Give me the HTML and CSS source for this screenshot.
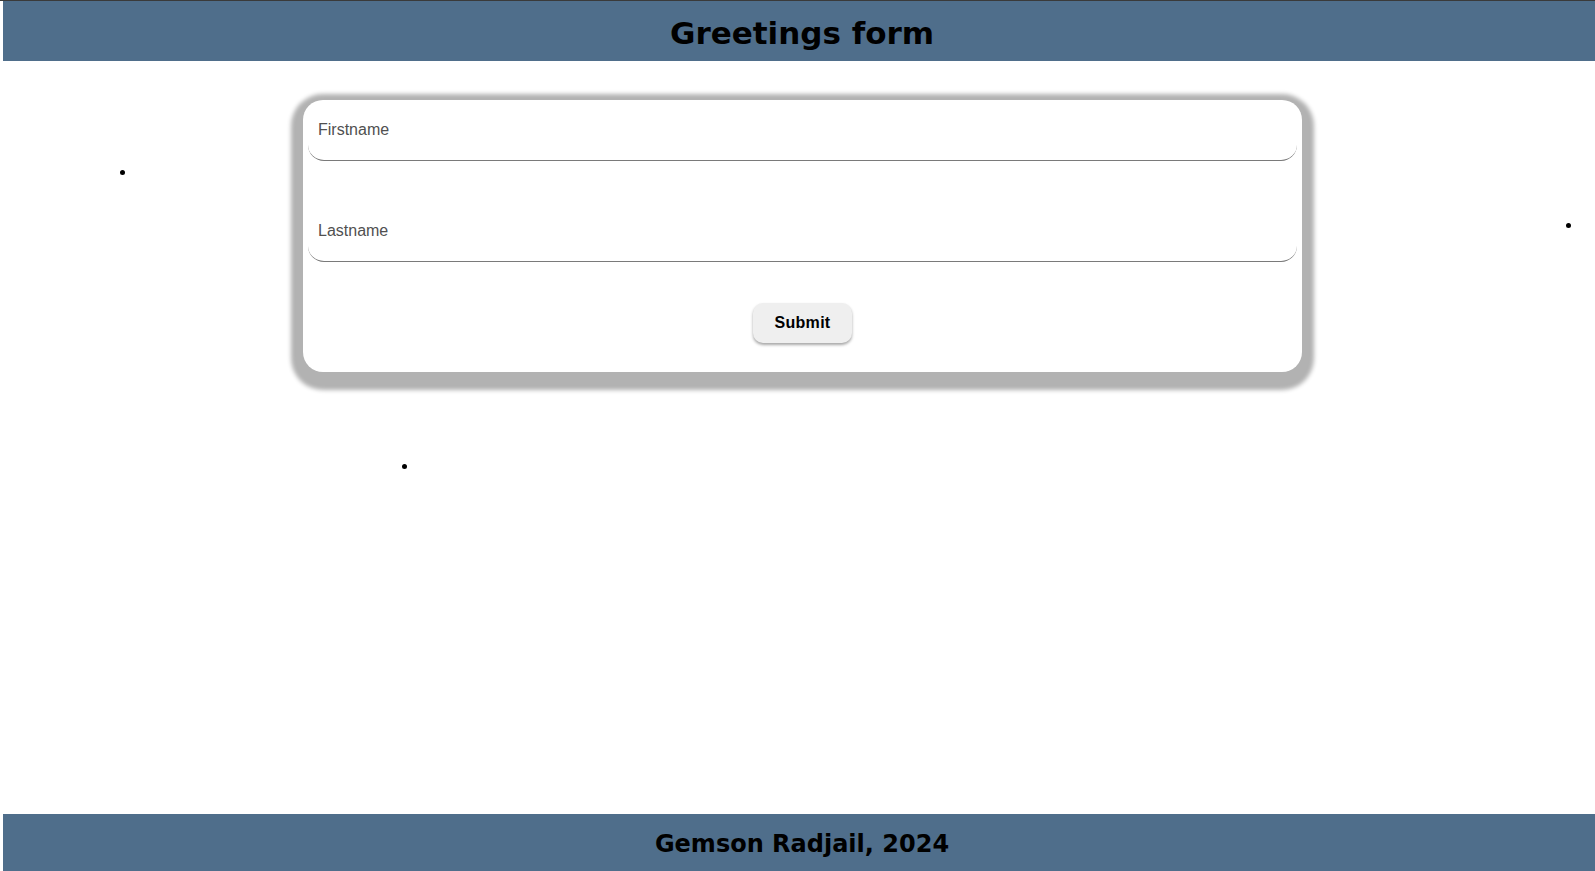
FILE: index.html
```html
<!DOCTYPE html>
<html lang="en">
<head>
<meta charset="utf-8">
<title>Greetings form</title>
<link rel="stylesheet" href="styles.css">
</head>
<body>
<header class="site-header">
  <h1 class="site-title">Greetings form</h1>
</header>
<main class="content">
  <form class="card">
    <input class="field" type="text" placeholder="Firstname">
    <input class="field" type="text" placeholder="Lastname">
    <button class="submit" type="button">Submit</button>
  </form>
  <span class="dot dot-a"></span>
  <span class="dot dot-b"></span>
  <span class="dot dot-c"></span>
</main>
<footer class="site-footer">
  <p class="footer-text">Gemson Radjail, 2024</p>
</footer>
</body>
</html>
```
FILE: styles.css
```css
html {
  margin: 0;
  padding: 0;
  border-top: 1px solid #3a3a3a;
  background: #ffffff;
}
body {
  margin: 0 0 0 3px;
  min-height: calc(100vh - 1px);
  display: flex;
  flex-direction: column;
  font-family: "Liberation Sans", Arial, sans-serif;
  color: #000;
}
.site-header {
  height: 60px;
  background: #4f6e8b;
  display: flex;
  align-items: center;
  justify-content: center;
}
.site-title {
  margin: 0;
  font-family: "DejaVu Sans", "Liberation Sans", sans-serif;
  font-size: 31px;
  font-weight: 700;
  letter-spacing: 0;
  line-height: 1;
  padding-left: 6px;
  padding-top: 4px;
}
.content {
  flex: 1;
  position: relative;
  padding: 39px 0 0 7px;
}
.card {
  width: 999px;
  height: 272px;
  box-sizing: border-box;
  margin: 0 auto;
  background: #fff;
  border-radius: 20px;
  box-shadow: 0 6px 4px 12px #b2b2b2;
  padding: 5px 5px 0;
  display: flex;
  flex-direction: column;
  align-items: center;
}
.field {
  width: 100%;
  height: 56px;
  box-sizing: border-box;
  border: none;
  border-bottom: 1px solid #7a7a7a;
  border-radius: 0 0 16px 16px;
  padding: 0 10px 6px;
  font-family: "Liberation Sans", Arial, sans-serif;
  font-size: 16px;
  color: #333;
  background: transparent;
  outline: none;
}
.field::placeholder {
  color: #505050;
}
.field + .field {
  margin-top: 45px;
}
.submit {
  margin-top: 41px;
  width: 99px;
  height: 40px;
  border: none;
  border-radius: 10px;
  background: #efefef;
  box-shadow: 0 2px 3px rgba(0, 0, 0, 0.35);
  font-family: "Liberation Sans", Arial, sans-serif;
  font-weight: 700;
  font-size: 16px;
  letter-spacing: 0.3px;
  color: #000;
  cursor: pointer;
}
.dot {
  position: absolute;
  width: 5px;
  height: 5px;
  border-radius: 50%;
  background: #000;
}
.dot-a { left: 117px; top: 109px; }
.dot-b { left: 1563px; top: 162px; }
.dot-c { left: 399px; top: 403px; }
.site-footer {
  height: 57px;
  background: #4f6e8b;
  display: flex;
  align-items: center;
  justify-content: center;
}
.footer-text {
  margin: 0;
  font-family: "DejaVu Sans", "Liberation Sans", sans-serif;
  font-size: 24px;
  font-weight: 700;
  letter-spacing: 0;
  line-height: 1;
  padding-left: 6px;
  padding-top: 3px;
}
```
